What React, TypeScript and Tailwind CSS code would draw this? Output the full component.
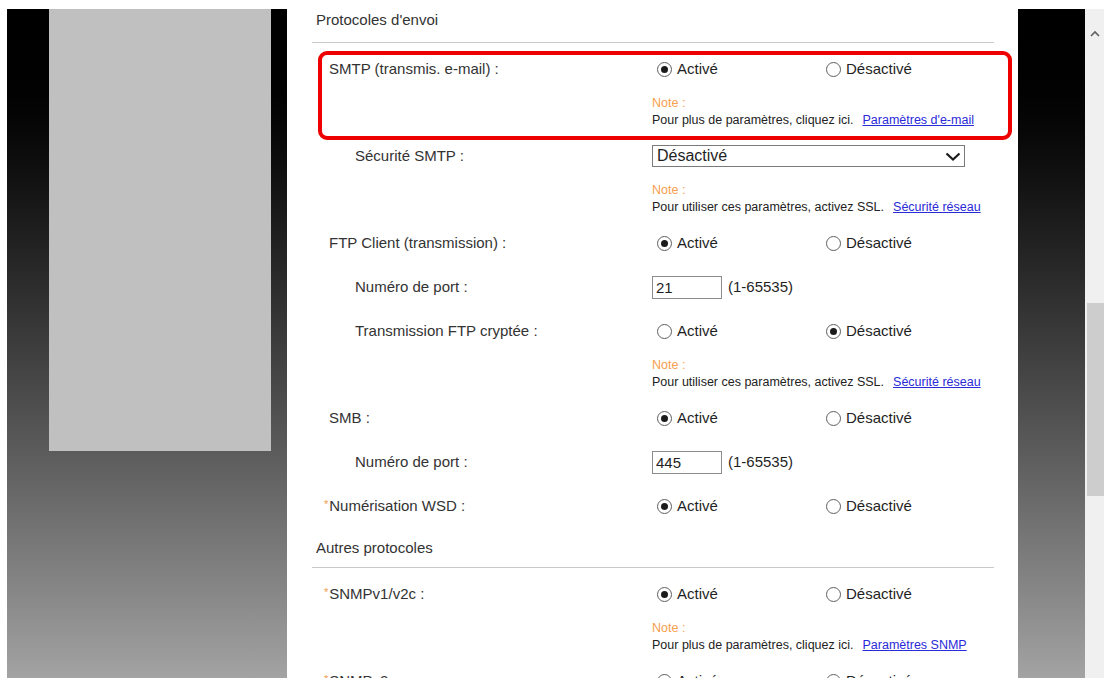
import React from "react";

// ─── Small form pieces ───────────────────────────────────────────────────────

function Radio({ checked, label }: { checked: boolean; label: string }) {
  return (
    <span className="flex w-[169px] items-center">
      <span className="ml-[5px] flex h-[15px] w-[15px] items-center justify-center rounded-full border border-[#5f5f5f] bg-white">
        {checked && <span className="h-[7px] w-[7px] rounded-full bg-[#1b1b1b]" />}
      </span>
      <span className="ml-[5px] text-[#1f1f1f]">{label}</span>
    </span>
  );
}

function OnOff({ on }: { on: boolean }) {
  return (
    <>
      <Radio checked={on} label="Activé" />
      <Radio checked={!on} label="Désactivé" />
    </>
  );
}

function Port({ value }: { value: string }) {
  return (
    <>
      <div className="h-[23px] w-[70px] border border-[#8c8c8c] bg-white px-[3px] leading-[21px] text-[#1f1f1f]">
        {value}
      </div>
      <span className="ml-[6px] text-[#1f1f1f]">(1-65535)</span>
    </>
  );
}

function Row({
  label,
  indent = false,
  star = false,
  children,
}: {
  label: string;
  indent?: boolean;
  star?: boolean;
  children: React.ReactNode;
}) {
  return (
    <div className="ml-[25px] flex h-[44px] items-center">
      <div className={`w-[340px] ${indent ? "pl-[43px]" : star ? "pl-[12px]" : "pl-[17px]"}`}>
        {star && <span className="relative top-[-3px] mr-[1px] text-[11px] text-[#f39a4a]">*</span>}
        {label}
      </div>
      <div className="flex items-center">{children}</div>
    </div>
  );
}

function Note({ text, link }: { text: string; link: string }) {
  return (
    <div className="ml-[365px] h-[43px] pt-[4px] text-[12.5px] leading-[17px]">
      <div className="text-[#f7a050]">Note :</div>
      <div className="text-[#222]">
        {text}
        <span className="ml-[9px] text-[#2a2ad8] underline">{link}</span>
      </div>
    </div>
  );
}

function SectionTitle({ title, tall = false }: { title: string; tall?: boolean }) {
  return (
    <div
      className={`ml-[25px] w-[682px] border-b border-[#c9c9c9] pl-[4px] ${
        tall ? "h-[40px] pt-[9px]" : "h-[34px]"
      }`}
    >
      <span className="leading-[18px]">{title}</span>
    </div>
  );
}

// ─── Page ─────────────────────────────────────────────────────────────────────

export default function App() {
  return (
    <div className="flex h-[687px] w-[1110px] bg-white pb-[9px] pl-[7px] pr-[6px] pt-[9px] font-['Liberation_Sans',Arial,sans-serif] text-[15px] text-[#333]">
      {/* Left side bar */}
      <div className="w-[280px] shrink-0 bg-linear-to-b from-black to-[#a3a3a3]">
        <div className="ml-[42px] h-[442px] w-[222px] bg-[#c0c0c0]" />
      </div>

      {/* Main form */}
      <div className="relative w-[731px] shrink-0 overflow-hidden bg-white">
        <SectionTitle title="Protocoles d'envoi" />
        <div className="h-[4px]" />

        <Row label="SMTP (transmis. e-mail) :">
          <OnOff on />
        </Row>
        <Note text="Pour plus de paramètres, cliquez ici." link="Paramètres d'e-mail" />

        <Row label="Sécurité SMTP :" indent>
          <div className="flex h-[22px] w-[313px] items-center justify-between border border-[#7a7a7a] bg-white pl-[4px] pr-[3px] text-[16px] text-[#1f1f1f]">
            <span>Désactivé</span>
            <svg width="16" height="9" viewBox="0 0 16 9" fill="none">
              <path d="M1.5 1.5 L8 7.5 L14.5 1.5" stroke="#1b1b1b" strokeWidth="2.2" />
            </svg>
          </div>
        </Row>
        <Note text="Pour utiliser ces paramètres, activez SSL." link="Sécurité réseau" />

        <Row label="FTP Client (transmission) :">
          <OnOff on />
        </Row>
        <Row label="Numéro de port :" indent>
          <Port value="21" />
        </Row>
        <Row label="Transmission FTP cryptée :" indent>
          <OnOff on={false} />
        </Row>
        <Note text="Pour utiliser ces paramètres, activez SSL." link="Sécurité réseau" />

        <Row label="SMB :">
          <OnOff on />
        </Row>
        <Row label="Numéro de port :" indent>
          <Port value="445" />
        </Row>
        <Row label="Numérisation WSD :" star>
          <OnOff on />
        </Row>

        <SectionTitle title="Autres protocoles" tall />
        <div className="h-[4px]" />

        <Row label="SNMPv1/v2c :" star>
          <OnOff on />
        </Row>
        <Note text="Pour plus de paramètres, cliquez ici." link="Paramètres SNMP" />
        <Row label="SNMPv3 :" star>
          <OnOff on={false} />
        </Row>

        {/* Highlight frame around the SMTP row */}
        <div className="pointer-events-none absolute left-[31px] top-[42px] h-[89px] w-[694px] rounded-[9px] border-[4px] border-[#ee0000]" />
      </div>

      {/* Right side bar */}
      <div className="w-[67px] shrink-0 bg-linear-to-b from-black to-[#a3a3a3]" />

      {/* Scrollbar */}
      <div className="flex w-[19px] shrink-0 flex-col items-center bg-[#f0f0f0]">
        <svg className="mt-[21px]" width="10" height="7" viewBox="0 0 10 7" fill="none">
          <path d="M1 6 L5 2 L9 6" stroke="#606060" strokeWidth="1.6" />
        </svg>
        <div className="ml-[2px] mt-[266px] h-[193px] w-[17px] bg-[#cdcdcd]" />
      </div>
    </div>
  );
}
